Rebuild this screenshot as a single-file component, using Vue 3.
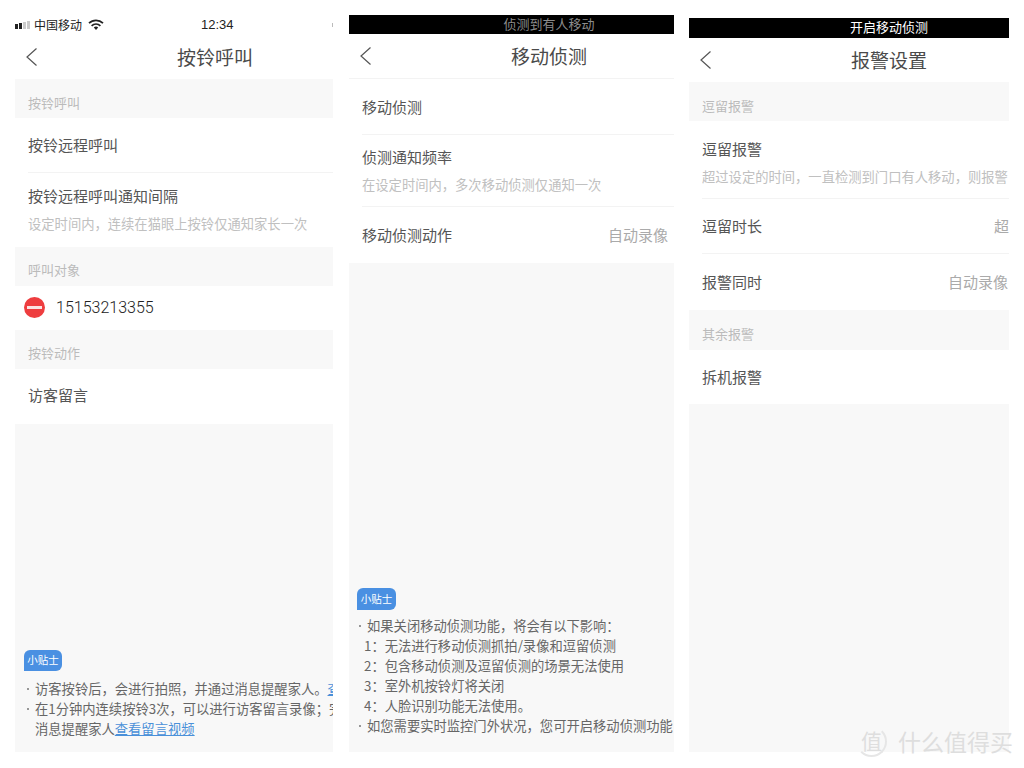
<template>
  <div class="app">
    <section class="col col-a">
      <div class="status">
        <div class="status-left">
          <span class="bars"><i></i><i></i><i class="off"></i><i class="off"></i></span>
          <span class="carrier">中国移动</span>
          <svg class="wifi" width="16" height="12" viewBox="0 0 16 12">
            <path d="M1 4.2a10 10 0 0 1 14 0" fill="none" stroke="#222" stroke-width="1.7" />
            <path d="M3.6 6.8a6.3 6.3 0 0 1 8.8 0" fill="none" stroke="#222" stroke-width="1.7" />
            <path d="M5.8 8.6a3.2 3.2 0 0 1 4.4 0L8 11z" fill="#222" />
          </svg>
        </div>
        <span class="clock">12:34</span>
        <span class="battery"></span>
      </div>
      <div class="nav">
        <svg class="back" width="13" height="20" viewBox="0 0 13 20">
          <polyline points="11.5,1.5 2,10 11.5,18.5" fill="none" stroke="#555" stroke-width="1.2" />
        </svg>
        <h2 class="center title">按铃呼叫</h2>
      </div>
      <div class="group">按铃呼叫</div>
      <div class="row line"><span>按铃远程呼叫</span></div>
      <div class="row tall">
        <span>按铃远程呼叫通知间隔</span>
        <small>设定时间内，连续在猫眼上按铃仅通知家长一次</small>
      </div>
      <div class="group mid">呼叫对象</div>
      <div class="contact">
        <span class="remove"><i></i></span>
        <span class="number">15153213355</span>
      </div>
      <div class="group low">按铃动作</div>
      <div class="row lift"><span>访客留言</span></div>
      <div class="fill">
        <span class="badge">小贴士</span>
        <p class="tip"><i class="dot"></i>访客按铃后，会进行拍照，并通过消息提醒家人。<a>查</a></p>
        <p class="tip"><i class="dot"></i>在1分钟内连续按铃3次，可以进行访客留言录像；完</p>
        <p class="tip cont">消息提醒家人<a>查看留言视频</a></p>
      </div>
    </section>

    <section class="col col-b">
      <div class="blackbar"><span class="center dim">侦测到有人移动</span></div>
      <div class="nav ruled">
        <svg class="back" width="13" height="20" viewBox="0 0 13 20">
          <polyline points="11.5,1.5 2,10 11.5,18.5" fill="none" stroke="#555" stroke-width="1.2" />
        </svg>
        <h2 class="center title">移动侦测</h2>
      </div>
      <div class="row line r56"><span>移动侦测</span></div>
      <div class="row tall line t72">
        <span>侦测通知频率</span>
        <small>在设定时间内，多次移动侦测仅通知一次</small>
      </div>
      <div class="row r56 split">
        <span>移动侦测动作</span>
        <em>自动录像</em>
      </div>
      <div class="fill">
        <span class="badge">小贴士</span>
        <p class="tip"><i class="dot"></i>如果关闭移动侦测功能，将会有以下影响：</p>
        <p v-for="item in effects" :key="item" class="tip num">{{ item }}</p>
        <p class="tip"><i class="dot"></i>如您需要实时监控门外状况，您可开启移动侦测功能</p>
      </div>
    </section>

    <section class="col col-c">
      <div class="blackbar"><span class="center">开启移动侦测</span></div>
      <div class="nav">
        <svg class="back" width="13" height="20" viewBox="0 0 13 20">
          <polyline points="11.5,1.5 2,10 11.5,18.5" fill="none" stroke="#555" stroke-width="1.2" />
        </svg>
        <h2 class="center title">报警设置</h2>
      </div>
      <div class="group">逗留报警</div>
      <div class="row tall line t78">
        <span>逗留报警</span>
        <small>超过设定的时间，一直检测到门口有人移动，则报警</small>
      </div>
      <div class="row line split flush">
        <span>逗留时长</span>
        <em>超</em>
      </div>
      <div class="row r56 split">
        <span>报警同时</span>
        <em>自动录像</em>
      </div>
      <div class="group g40">其余报警</div>
      <div class="row r54"><span>拆机报警</span></div>
      <div class="fill"></div>
    </section>

    <div class="mark">
      <span class="mark-icon">值</span>
      <span class="mark-text">什么值得买</span>
    </div>
  </div>
</template>

<script setup>
const effects = [
  '1：无法进行移动侦测抓拍/录像和逗留侦测',
  '2：包含移动侦测及逗留侦测的场景无法使用',
  '3：室外机按铃灯将关闭',
  '4：人脸识别功能无法使用。',
]
</script>

<style>
body {
  margin: 0;
  background: #fff;
}
</style>

<style scoped>
* {
  box-sizing: border-box;
}
.app {
  position: relative;
  width: 1024px;
  height: 768px;
  padding: 15px 15px 16px;
  display: flex;
  gap: 15px;
  overflow: hidden;
  background: #fff;
  font-family: "Noto Sans CJK SC", "Liberation Sans", sans-serif;
  color: #555;
}
.col {
  display: flex;
  flex-direction: column;
  overflow: hidden;
  flex-shrink: 0;
}
.col-a {
  width: 318px;
  margin-right: 1px;
}
.col-b {
  width: 325px;
}
.col-c {
  width: 320px;
  margin-top: 3px;
}
.center {
  display: block;
  flex-shrink: 0;
  width: 400px;
  text-align: center;
}
.status {
  position: relative;
  height: 20px;
  display: flex;
  align-items: center;
  color: #222;
}
.status-left {
  display: flex;
  align-items: center;
}
.bars {
  display: flex;
  align-items: flex-end;
  gap: 1px;
  width: 19px;
  height: 8px;
}
.bars i {
  width: 3px;
  height: 5px;
  background: #222;
}
.bars i:nth-child(2) {
  height: 6px;
}
.bars i:nth-child(3) {
  height: 7px;
}
.bars i:nth-child(4) {
  height: 8px;
}
.bars i.off {
  background: #ccc;
}
.carrier {
  font-size: 12px;
  line-height: 20px;
}
.wifi {
  margin-left: 6px;
}
.clock {
  position: absolute;
  left: 186px;
  top: 0;
  font-family: "Liberation Sans", sans-serif;
  font-size: 13px;
  line-height: 20px;
}
.battery {
  position: absolute;
  right: 0;
  top: 8px;
  width: 1px;
  height: 4px;
  background: #bbb;
}
.nav {
  position: relative;
  height: 44px;
  display: flex;
  align-items: center;
}
.nav.ruled {
  height: 45px;
  border-bottom: 1px solid #f3f3f3;
}
.back {
  position: absolute;
  left: 10px;
  top: 50%;
  transform: translateY(-50%);
}
.title {
  margin: 0 0 1px;
  font-size: 19px;
  font-weight: 400;
  line-height: 26px;
  color: #4a4a4a;
}
.col-b .title,
.col-c .title {
  margin-bottom: 0;
}
.blackbar {
  height: 19px;
  padding-bottom: 1px;
  background: #000;
  color: #fff;
  display: flex;
  align-items: center;
  font-size: 13px;
  line-height: 18px;
}
.col-c .blackbar {
  height: 20px;
  padding-bottom: 3px;
}
.dim {
  color: #8c8c8c;
}
.group {
  height: 39px;
  padding: 8px 13px 0;
  display: flex;
  align-items: center;
  background: #f8f8f8;
  font-size: 13px;
  color: #bbb;
}
.group.mid {
  padding-top: 6px;
}
.group.low {
  padding-top: 5px;
}
.group.g40 {
  height: 40px;
  padding-top: 6px;
}
.row {
  height: 55px;
  margin-left: 13px;
  display: flex;
  align-items: center;
  font-size: 15px;
  line-height: 22px;
  color: #555;
  white-space: nowrap;
  overflow: hidden;
}
.row.line {
  border-bottom: 1px solid #f3f3f3;
}
.row.lift {
  padding-bottom: 3px;
}
.row.tall {
  height: 74px;
  padding-bottom: 2px;
  flex-direction: column;
  align-items: flex-start;
  justify-content: center;
}
.row.t72 {
  height: 72px;
}
.row.t78 {
  height: 78px;
  padding-bottom: 0;
  padding-top: 4px;
}
.r56 {
  height: 56px;
}
.r54 {
  height: 54px;
  padding-bottom: 1px;
}
.row small {
  margin-top: 8px;
  font-size: 13.3px;
  line-height: 18px;
  color: #c0c0c0;
}
.split {
  justify-content: space-between;
  padding-right: 6px;
}
.col-c .split {
  padding-right: 1px;
}
.col-c .split.flush {
  padding-right: 0;
}
.split em {
  font-style: normal;
  font-size: 15px;
  color: #aaa;
}
.contact {
  height: 44px;
  padding: 0 0 1px 9px;
  display: flex;
  align-items: center;
  gap: 11px;
}
.remove {
  width: 21px;
  height: 21px;
  border-radius: 50%;
  background: #ee3d3f;
  display: flex;
  align-items: center;
  justify-content: center;
}
.remove i {
  width: 15px;
  height: 3px;
  background: #fbe3e3;
}
.number {
  font-family: Roboto, "Liberation Sans", sans-serif;
  font-size: 16px;
  font-weight: 300;
  color: #222;
}
.fill {
  flex: 1;
  padding: 0 0 13px 9px;
  display: flex;
  flex-direction: column;
  justify-content: flex-end;
  align-items: flex-start;
  background: #f8f8f8;
}
.col-b .fill {
  padding: 0 0 16px 8px;
}
.badge {
  width: 38px;
  height: 21px;
  margin-bottom: 8px;
  border-radius: 6px 6px 6px 0;
  background: #4a90e2;
  color: #fff;
  font-size: 10.5px;
  line-height: 20px;
  text-align: center;
}
.col-b .badge {
  width: 39px;
  height: 22px;
  margin-bottom: 6px;
  line-height: 21px;
}
.tip {
  margin: 0;
  font-size: 13.3px;
  line-height: 20px;
  color: #666;
  white-space: nowrap;
}
.dot {
  display: inline-block;
  width: 2px;
  height: 2px;
  margin: 0 6px 4px 3px;
  border-radius: 50%;
  background: #777;
}
.col-b .dot {
  margin: 0 6px 4px 2px;
}
.tip.cont {
  padding-left: 11px;
}
.tip.num {
  padding-left: 7px;
}
.tip a {
  color: #4a90d9;
  text-decoration: underline;
}
.mark {
  position: absolute;
  right: 11px;
  bottom: 11px;
  display: flex;
  align-items: center;
  gap: 11px;
  color: #dedede;
}
.mark-icon {
  width: 31px;
  height: 31px;
  border: 2px solid transparent;
  border-right-color: #e6e6e6;
  border-bottom-color: #e6e6e6;
  border-radius: 50%;
  font-size: 21px;
  line-height: 25px;
  text-align: center;
}
.mark-text {
  font-size: 23px;
  line-height: 32px;
}
</style>
